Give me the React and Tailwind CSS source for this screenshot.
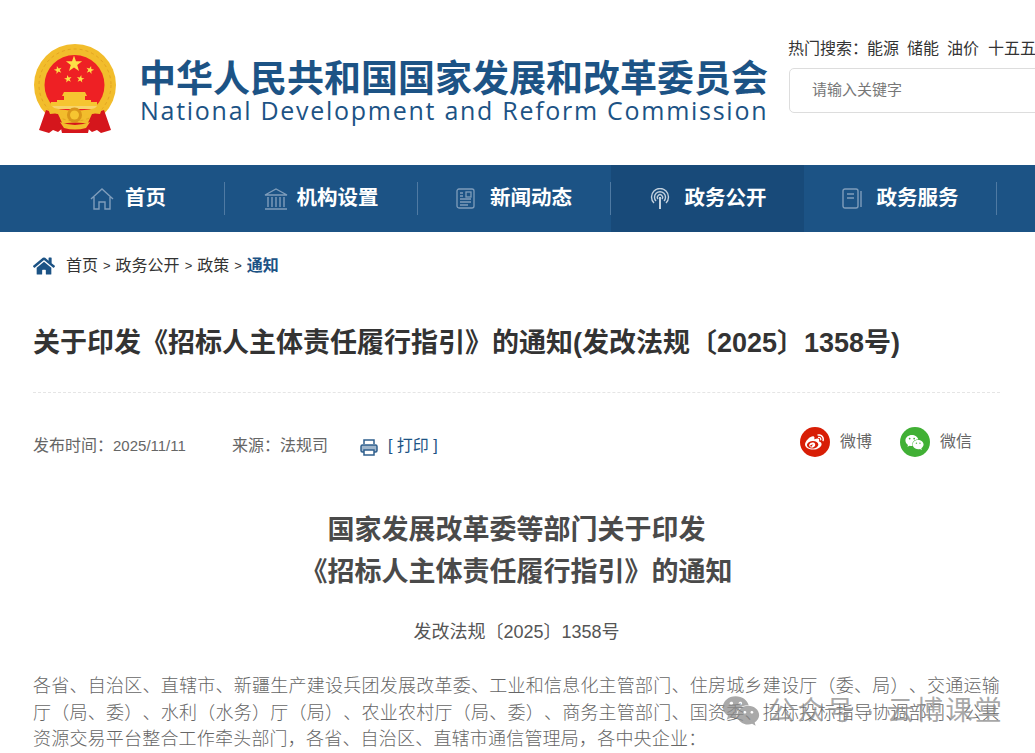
import React from 'react';
import { FaWeibo, FaWeixin, FaHome } from 'react-icons/fa';

const cn = { fontFamily: '"Liberation Sans", "Noto Sans CJK SC", sans-serif' };

const Star = ({ cx, cy, r, rot = 0 }) => {
  const pts = [];
  for (let i = 0; i < 10; i++) {
    const rad = i % 2 === 0 ? r : r * 0.4;
    const a = ((i * 36 - 90 + rot) * Math.PI) / 180;
    pts.push(`${(cx + rad * Math.cos(a)).toFixed(2)},${(cy + rad * Math.sin(a)).toFixed(2)}`);
  }
  return <polygon points={pts.join(' ')} fill="#fde047" />;
};

const Emblem = () => (
  <svg width="84" height="91" viewBox="33 43 84 91" className="shrink-0">
    {/* wreath + shield */}
    <circle cx="75" cy="85" r="41" fill="#f2bd2c" />
    <circle cx="75" cy="85" r="36" fill="none" stroke="#e3a322" strokeWidth="1" strokeDasharray="3 3" />
    <circle cx="74.5" cy="85" r="30" fill="#ee2024" />
    <Star cx={74} cy={64} r={8.5} />
    <Star cx={58} cy={70} r={4.2} rot={-15} />
    <Star cx={90} cy={70} r={4.2} rot={15} />
    <Star cx={68} cy={79} r={4} rot={-10} />
    <Star cx={80.5} cy={79} r={4} rot={10} />
    {/* gate */}
    <path d="M64 92h21l2 4h-2v4h6v2h6v4H51v-4h6v-2h7v-4h-2z" fill="#f6c531" />
    <path d="M52 106h45l-3 3H55z" fill="#f7d46a" />
    {/* ribbons, behind the gear */}
    <path d="M46 110l12 4l6 13l-6 5l-5-2l-4 3l-10-3z" fill="#d5161c" />
    <path d="M104 110l-12 4l-6 13l6 5l5-2l4 3l10-3z" fill="#d5161c" />
    <path d="M60 124q15-3 30 0l-2 9H62z" fill="#d5161c" />
    {/* lower wreath band + gear */}
    <path d="M47 106q28 9 56 0l-3 8q-13-2-25 6q-12-8-25-6z" fill="#f2bd2c" />
    <path d="M60 122q15 6 30 0l-4 6q-11 3-22 0z" fill="#f2bd2c" />
    <circle cx="74.5" cy="115" r="7.5" fill="#d9951a" />
    <circle cx="74.5" cy="115" r="4.5" fill="#f6c531" />
  </svg>
);

const icon = 'stroke-[#7f9dbb]';

const NavHome = () => (
  <svg width="24" height="22" viewBox="0 0 24 22" fill="none" className={`${icon} shrink-0`} strokeWidth="1.4">
    <path d="M1 11L12 1l11 10M4 9v12h5v-7h6v7h5V9" />
  </svg>
);

const NavBank = () => (
  <svg width="24" height="22" viewBox="0 0 24 22" fill="none" className={`${icon} shrink-0`} strokeWidth="1.4">
    <path d="M1 7L12 1l11 6zM4 9v10M8 9v10M12 9v10M16 9v10M20 9v10M1 21h22" />
  </svg>
);

const NavNews = () => (
  <svg width="19" height="21" viewBox="0 0 19 21" fill="none" className={`${icon} shrink-0`} strokeWidth="1.3">
    <rect x="1" y="1" width="17" height="19" rx="2" />
    <path d="M4 5h3M4 8h3M4 11h11M4 14h11M4 17h8" />
    <rect x="10" y="4" width="5" height="5" />
  </svg>
);

const NavSignal = () => (
  <svg width="22" height="22" viewBox="0 0 22 22" fill="none" className="stroke-[#c3d1de] shrink-0" strokeWidth="1.4">
    <path d="M5 15a8.5 8.5 0 1 1 12 0M7 13a5.5 5.5 0 1 1 8 0M9 11a2.6 2.6 0 1 1 4 0" />
    <path d="M11 9v12" strokeWidth="2" />
  </svg>
);

const NavBook = () => (
  <svg width="20" height="21" viewBox="0 0 20 21" fill="none" className={`${icon} shrink-0`} strokeWidth="1.4">
    <rect x="1" y="1" width="15" height="19" rx="2" />
    <path d="M5 6h7M5 10h7M19 3v16" />
  </svg>
);

const navItems = [
  { label: '首页', Icon: NavHome, gap: 'gap-[11px]' },
  { label: '机构设置', Icon: NavBank, gap: 'gap-[9px]' },
  { label: '新闻动态', Icon: NavNews, gap: 'gap-[15px]' },
  { label: '政务公开', Icon: NavSignal, gap: 'gap-[14px]', active: true },
  { label: '政务服务', Icon: NavBook, gap: 'gap-[15px]' },
];

const PrintIcon = () => (
  <svg width="18" height="17" viewBox="0 0 18 17" fill="none" className="stroke-[#2f5f8d] shrink-0" strokeWidth="1.5">
    <path d="M4 5V1h10v4" />
    <rect x="1" y="6" width="16" height="7" rx="1.5" fill="#9fb6cc" />
    <rect x="4" y="11" width="10" height="5" fill="#fff" />
  </svg>
);

export default function App() {
  return (
    <div className="relative w-[1035px] h-[753px] overflow-hidden bg-white" style={cn}>
      {/* Header */}
      <header className="h-[165px] flex">
        <div className="flex items-start pt-[43px] pl-[33px] w-[788px] shrink-0">
          <Emblem />
          <div className="ml-[23px] pt-[19px] w-[650px] shrink-0 text-[#1c5385]">
            <div className="text-[37px] leading-[36px] font-bold whitespace-nowrap -ml-[1px]">中华人民共和国国家发展和改革委员会</div>
            <div className="font-['Open_Sans'] text-[25px] leading-[24px] tracking-[1.72px] whitespace-nowrap">National Development and Reform Commission</div>
          </div>
        </div>
        <div className="shrink-0 w-[300px] pt-[39px]">
          <div className="flex text-[16px] leading-[20px] text-[#333] whitespace-nowrap">
            <span className="w-[79px]">热门搜索：</span>
            <span>能源</span>
            <span className="ml-[8px]">储能</span>
            <span className="ml-[8px]">油价</span>
            <span className="ml-[9px]">十五五</span>
          </div>
          <div className="mt-[9px] ml-[1px] h-[45px] w-[300px] border border-[#ddd] rounded-[5px] flex items-center pl-[22px] text-[15px] text-[#777]">
            请输入关键字
          </div>
        </div>
      </header>

      {/* Nav */}
      <nav className="h-[67px] bg-[#1c5385] pl-[32px] flex">
        {navItems.map(({ label, Icon, gap, active }) => (
          <div
            key={label}
            className={
              active
                ? 'w-[193px] shrink-0 flex items-center bg-[#184a79]'
                : 'w-[193px] shrink-0 flex items-center'
            }
          >
            <div className={`flex items-center justify-center ${gap} flex-1`}>
              <Icon />
              <span className="text-[20.5px] font-bold text-white whitespace-nowrap">{label}</span>
            </div>
            {!active && <div className="w-px h-[33px] bg-[#4f7aa3] shrink-0" />}
          </div>
        ))}
      </nav>

      {/* Breadcrumb */}
      <div className="pl-[33px] h-[67px] flex items-center text-[16px] text-[#333]">
        <FaHome className="text-[#1c5385] text-[22px] shrink-0 mr-[11px]" />
        <span>首页</span>
        <span className="mx-[5px] text-[13px]">&gt;</span>
        <span>政务公开</span>
        <span className="mx-[5px] text-[13px]">&gt;</span>
        <span>政策</span>
        <span className="mx-[5px] text-[13px]">&gt;</span>
        <span className="text-[#1c5385] font-bold">通知</span>
      </div>

      {/* Article */}
      <main className="px-[33px] w-[1033px]">
        <h1 className="text-[27px] leading-[34px] font-bold text-[#333] mt-[27px] pb-[32px] border-b border-dashed border-[#e5e5e5] whitespace-nowrap">
          关于印发《招标人主体责任履行指引》的通知(发改法规〔2025〕1358号)
        </h1>

        <div className="flex items-center h-[30px] mt-[38px] text-[16px] text-[#666]">
          <span className="whitespace-nowrap">发布时间：<span className="text-[15px]">2025/11/11</span></span>
          <span className="ml-[46px] whitespace-nowrap">来源：法规司</span>
          <span className="ml-[32px] mt-[2px]"><PrintIcon /></span>
          <span className="ml-[10px] text-[#1c5385] whitespace-nowrap">[ 打印 ]</span>
          <div className="ml-auto flex items-center mr-[28px] -mt-[8px]">
            <span className="w-[30px] h-[30px] rounded-full bg-[#d81e06] flex items-center justify-center">
              <FaWeibo className="text-white text-[19px]" />
            </span>
            <span className="ml-[10px] text-[#666]">微博</span>
            <span className="ml-[28px] w-[30px] h-[30px] rounded-full bg-[#41b035] flex items-center justify-center">
              <FaWeixin className="text-white text-[19px]" />
            </span>
            <span className="ml-[10px] text-[#666]">微信</span>
          </div>
        </div>

        <h2 className="mt-[48px] text-center text-[27px] leading-[42px] font-bold text-[#4a4a4a]">
          国家发展改革委等部门关于印发
          <br />
          《招标人主体责任履行指引》的通知
        </h2>

        <p className="mt-[27px] text-center text-[18px] leading-[24px] text-[#555]">发改法规〔2025〕1358号</p>

        <p className="mt-[29px] text-[18px] leading-[26.5px] tracking-[0.2px] text-[#666] font-light text-justify [text-spacing-trim:space-all]">
          各省、自治区、直辖市、新疆生产建设兵团发展改革委、工业和信息化主管部门、住房城乡建设厅（委、局）、交通运输厅（局、委）、水利（水务）厅（局）、农业农村厅（局、委）、商务主管部门、国资委、招标投标指导协调部门、公共资源交易平台整合工作牵头部门，各省、自治区、直辖市通信管理局，各中央企业：
        </p>
      </main>

      {/* Watermark */}
      <div className="absolute left-[722px] top-[691px] flex items-center text-[#8c8c8c]/75">
        <FaWeixin className="text-[38px] shrink-0" />
        <span className="ml-[8px] text-[27px] tracking-[2.3px] whitespace-nowrap">公众号 · 云博课堂</span>
      </div>
    </div>
  );
}
